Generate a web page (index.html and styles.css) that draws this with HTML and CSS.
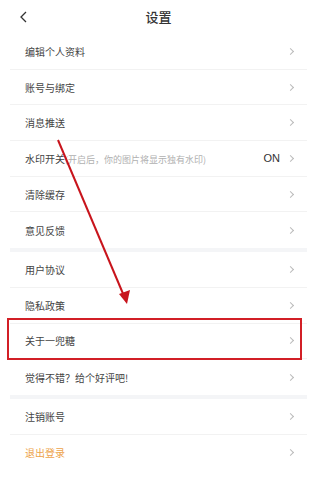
FILE: index.html
```html
<!DOCTYPE html>
<html lang="zh-CN">
  <head>
    <meta charset="UTF-8" />
    <meta name="viewport" content="width=device-width, initial-scale=1.0" />
    <title>设置</title>
    <link rel="stylesheet" href="styles.css">
  </head>
  <body>
    <div class="page">
      <!-- Top bar -->
      <div class="topbar">
        <svg class="back" width="10" height="12" viewBox="0 0 10 12">
          <path d="M7 1 L2 6 L7 11" fill="none" stroke="#333" stroke-width="1.3" />
        </svg>
        <h1>设置</h1>
      </div>

      <!-- Settings list -->
      <div class="group">
        <div class="row"><span class="label">编辑个人资料</span><i class="chev"></i></div>
        <div class="row"><span class="label">账号与绑定</span><i class="chev"></i></div>
        <div class="row"><span class="label">消息推送</span><i class="chev"></i></div>
        <div class="row">
          <span class="label">水印开关<small>(开启后，你的图片将显示独有水印)</small></span>
          <span class="value">ON</span><i class="chev"></i>
        </div>
        <div class="row"><span class="label">清除缓存</span><i class="chev"></i></div>
        <div class="row"><span class="label">意见反馈</span><i class="chev"></i></div>
      </div>

      <div class="group">
        <div class="row"><span class="label">用户协议</span><i class="chev"></i></div>
        <div class="row"><span class="label">隐私政策</span><i class="chev"></i></div>
        <div class="row"><span class="label">关于一兜糖</span><i class="chev"></i></div>
        <div class="row"><span class="label">觉得不错？给个好评吧!</span><i class="chev"></i></div>
      </div>

      <div class="group">
        <div class="row"><span class="label">注销账号</span><i class="chev"></i></div>
        <div class="row"><span class="label logout">退出登录</span><i class="chev"></i></div>
      </div>

      <!-- Annotation drawn over the screenshot -->
      <svg class="annotation" width="317" height="500" viewBox="0 0 317 500">
        <line x1="58" y1="140" x2="124" y2="296" stroke="#c8141c" stroke-width="2" />
        <polygon points="127,304 119,294 130,290" fill="#c8141c" />
        <rect x="8" y="319" width="293" height="40" fill="none" stroke="#d21f26" stroke-width="2" />
      </svg>
    </div>
  </body>
</html>
```

FILE: styles.css
```css
/* Basic styling */
* {
  margin: 0;
  padding: 0;
  box-sizing: border-box;
}
body {
  background-color: #fff;
  color: #333;
  font-family: "Noto Sans CJK SC", "Noto Sans", sans-serif;
}
.page {
  position: relative;
  width: 317px;
  height: 500px;
}
.topbar {
  position: relative;
  height: 34px;
  display: flex;
  align-items: center;
  justify-content: center;
}
.topbar h1 {
  font-size: 13px;
  font-weight: 500;
  color: #333;
  margin-top: -2px;
}
.back {
  position: absolute;
  left: 19px;
  top: 11px;
}
.group {
  margin: 0 10px;
}
.group + .group {
  border-top: 4px solid #f4f5f7;
}
.row {
  height: 35.7px;
  display: flex;
  align-items: center;
  padding: 0 14px 0 15px;
  border-bottom: 1px solid #f2f2f2;
}
.group .row:last-child {
  border-bottom: none;
}
.group:last-child .row:last-child {
  border-bottom: 1px solid #f2f2f2;
}
.label {
  flex: 1;
  font-size: 10px;
  color: #444;
}
.label small {
  font-size: 9px;
  color: #b0b0b0;
}
.value {
  font-family: "Liberation Sans", Arial, sans-serif;
  font-size: 11px;
  color: #333;
  margin-right: 8px;
}
.logout {
  color: #eda34a;
}
.chev {
  width: 5px;
  height: 5px;
  border-top: 1px solid #bbb;
  border-right: 1px solid #bbb;
  transform: rotate(45deg);
}
.annotation {
  position: absolute;
  left: 0;
  top: 0;
}
```
